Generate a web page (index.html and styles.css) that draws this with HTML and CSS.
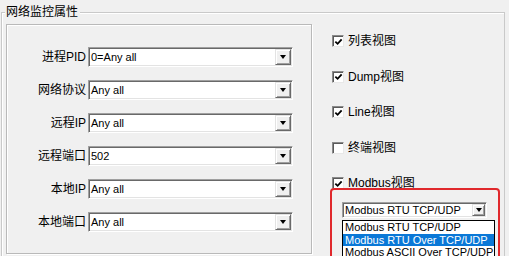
FILE: index.html
```html
<!DOCTYPE html>
<html>
<head>
<meta charset="utf-8">
<link rel="stylesheet" href="styles.css">
</head>
<body>
<div class="group">
  <div class="legend">网络监控属性</div>
  <div class="body">
    <div class="panel">
      <div class="row"><span class="lbl">进程PID</span><div class="combo"><span class="val">0=Any all</span><span class="btn"><i class="tri"></i></span></div></div>
      <div class="row"><span class="lbl">网络协议</span><div class="combo"><span class="val">Any all</span><span class="btn"><i class="tri"></i></span></div></div>
      <div class="row"><span class="lbl">远程IP</span><div class="combo"><span class="val">Any all</span><span class="btn"><i class="tri"></i></span></div></div>
      <div class="row"><span class="lbl">远程端口</span><div class="combo"><span class="val">502</span><span class="btn"><i class="tri"></i></span></div></div>
      <div class="row"><span class="lbl">本地IP</span><div class="combo"><span class="val">Any all</span><span class="btn"><i class="tri"></i></span></div></div>
      <div class="row"><span class="lbl">本地端口</span><div class="combo"><span class="val">Any all</span><span class="btn"><i class="tri"></i></span></div></div>
    </div>
    <div class="side">
      <div class="chk"><span class="box"><svg width="10" height="10" viewBox="0 0 10 10"><polyline points="1.5,4.5 4,7 8.5,2" fill="none" stroke="#000" stroke-width="2"/></svg></span><span class="txt">列表视图</span></div>
      <div class="chk"><span class="box"><svg width="10" height="10" viewBox="0 0 10 10"><polyline points="1.5,4.5 4,7 8.5,2" fill="none" stroke="#000" stroke-width="2"/></svg></span><span class="txt">Dump视图</span></div>
      <div class="chk"><span class="box"><svg width="10" height="10" viewBox="0 0 10 10"><polyline points="1.5,4.5 4,7 8.5,2" fill="none" stroke="#000" stroke-width="2"/></svg></span><span class="txt">Line视图</span></div>
      <div class="chk"><span class="box"></span><span class="txt">终端视图</span></div>
      <div class="chk"><span class="box"><svg width="10" height="10" viewBox="0 0 10 10"><polyline points="1.5,4.5 4,7 8.5,2" fill="none" stroke="#000" stroke-width="2"/></svg></span><span class="txt">Modbus视图</span></div>
      <div class="combo mcombo">
        <span class="val">Modbus RTU TCP/UDP</span><span class="btn"><i class="tri"></i></span>
        <div class="list">
          <div class="item">Modbus RTU TCP/UDP</div>
          <div class="item sel">Modbus RTU Over TCP/UDP</div>
          <div class="item">Modbus ASCII Over TCP/UDP</div>
        </div>
      </div>
    </div>
  </div>
  <div class="redbox"></div>
</div>
</body>
</html>
```
FILE: styles.css
```css
html, body {
  margin: 0;
  padding: 0;
  background: #f0f0f0;
  width: 509px;
  height: 256px;
  overflow: hidden;
  font-family: "Liberation Sans", "Noto Sans CJK SC", sans-serif;
  color: #000;
}

.group {
  position: relative;
  margin: 12px 4px 0 1px;
  height: 270px;
  border: 1px solid #c9c9c9;
  box-shadow: inset 1px 1px #fff;
}

.legend {
  position: absolute;
  top: -9px;
  left: 3px;
  padding: 0 2px 0 1px;
  background: #f0f0f0;
  font-size: 12px;
  line-height: 16px;
}

.body {
  display: flex;
  padding-top: 11px;
}

.panel {
  margin-left: 4px;
  width: 304px;
  height: 206px;
  border: 1px solid #b9b9b9;
  box-shadow: inset 1px 1px #fff, 1px 1px #fff;
  padding-top: 22px;
  box-sizing: content-box;
  display: flex;
  flex-direction: column;
  gap: 13px;
}

.row {
  display: flex;
  align-items: center;
  height: 20px;
}

.lbl {
  width: 79px;
  text-align: right;
  font-size: 12px;
  line-height: 16px;
  margin-right: 2px;
  white-space: nowrap;
}

.combo {
  position: relative;
  display: flex;
  width: 205px;
  height: 20px;
  box-sizing: border-box;
  background: #fff;
  border: 1px solid;
  border-color: #a0a0a0 #fff #fff #a0a0a0;
  box-shadow: inset 1px 1px #696969, inset -1px -1px #e3e3e3;
}

.val {
  flex: 1;
  padding-left: 2px;
  font-size: 11px;
  line-height: 18px;
  white-space: nowrap;
}

.btn {
  width: 16px;
  height: 16px;
  margin: 1px;
  box-sizing: border-box;
  background: #f0f0f0;
  border: 1px solid;
  border-color: #e3e3e3 #696969 #696969 #e3e3e3;
  box-shadow: inset 1px 1px #fff, inset -1px -1px #a0a0a0;
  display: flex;
  align-items: center;
  justify-content: center;
}

.tri {
  width: 0;
  height: 0;
  border-left: 3.5px solid transparent;
  border-right: 3.5px solid transparent;
  border-top: 4px solid #000;
}

.side {
  padding-top: 9px;
  padding-left: 20px;
  display: flex;
  flex-direction: column;
}

.chk {
  display: flex;
  align-items: center;
  height: 16px;
}

.chk + .chk {
  margin-top: 19.5px;
}

.box {
  width: 12px;
  height: 12px;
  box-sizing: border-box;
  background: #fff;
  border: 1px solid;
  border-color: #8a8a8a #e8e8e8 #e8e8e8 #8a8a8a;
  box-shadow: inset 1px 1px #5a5a5a;
  display: flex;
  align-items: center;
  justify-content: center;
  padding: 1px 0 0 1px;
}

.txt {
  margin-left: 4px;
  font-size: 12px;
  line-height: 16px;
  white-space: nowrap;
}

.mcombo {
  margin-top: 11px;
  margin-left: 10px;
  width: 145px;
  height: 16px;
}

.mcombo .val {
  line-height: 14px;
  font-size: 11px;
}

.mcombo .btn {
  width: 13px;
  height: 12px;
}

.list {
  position: absolute;
  top: 17px;
  left: -1px;
  width: 151px;
  background: #fff;
  border: 1px solid #000;
  z-index: 2;
}

.item {
  height: 12.5px;
  line-height: 12.5px;
  font-size: 11px;
  padding-left: 2px;
  white-space: nowrap;
}

.item.sel {
  background: #0a78d7;
  color: #fff;
}

.redbox {
  position: absolute;
  left: 328px;
  top: 175px;
  width: 166px;
  height: 100px;
  border: 2.5px solid #e0282c;
  border-radius: 4px;
  z-index: 1;
}
```
